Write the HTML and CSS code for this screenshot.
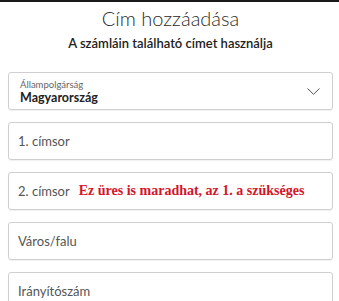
FILE: index.html
```html
<!DOCTYPE html>
<html lang="hu">
<head>
<meta charset="utf-8">
<link rel="stylesheet" href="styles.css">
</head>
<body>
<div class="topline"></div>
<main class="page">
  <h1 class="title">Cím hozzáadása</h1>
  <p class="subtitle">A számláin található címet használja</p>
  <div class="fields">
    <div class="field select">
      <div class="select-text">
        <span class="small-label">Állampolgárság</span>
        <span class="value">Magyarország</span>
      </div>
      <svg class="chevron" width="13" height="7" viewBox="0 0 13 7"><path d="M0.5 0.5 L6.5 6.3 L12.5 0.5" fill="none" stroke="#555" stroke-width="1"/></svg>
    </div>
    <div class="field"><span class="placeholder">1. címsor</span></div>
    <div class="field"><span class="placeholder">2. címsor</span><span class="note">Ez üres is maradhat, az 1. a szükséges</span></div>
    <div class="field"><span class="placeholder">Város/falu</span></div>
    <div class="field"><span class="placeholder">Irányítószám</span></div>
  </div>
</main>
</body>
</html>
```
FILE: styles.css
```css
html, body {
  margin: 0;
  padding: 0;
  background: #fff;
}
body {
  font-family: Lato, "Open Sans", sans-serif;
  color: #222;
  overflow: hidden;
}
.topline {
  height: 2px;
  background: #1a1a1a;
}
.page {
  padding: 0 6px 0 8px;
}
.title {
  margin: 3px 0 0;
  text-align: center;
  font-weight: 300;
  font-size: 20px;
  line-height: 26px;
  color: #2a2a2a;
}
.subtitle {
  margin: 3px 0 0;
  text-align: center;
  font-weight: 600;
  font-size: 13px;
  line-height: 18px;
  color: #222;
}
.fields {
  margin-top: 20px;
  display: flex;
  flex-direction: column;
  gap: 12px;
}
.field {
  box-sizing: border-box;
  height: 38px;
  border: 1px solid #cfcfcf;
  border-radius: 3px;
  box-shadow: 0 1px 1px rgba(0,0,0,0.06);
  display: flex;
  align-items: center;
  padding: 0 10px 0 9px;
  flex-shrink: 0;
}
.select {
  justify-content: space-between;
  padding-left: 11px;
  padding-right: 12px;
}
.select-text {
  display: flex;
  flex-direction: column;
  padding-top: 1px;
}
.small-label {
  font-size: 9.5px;
  line-height: 11px;
  color: #666;
}
.value {
  font-size: 12.5px;
  line-height: 15px;
  font-weight: 700;
  color: #222;
}
.placeholder {
  font-size: 13px;
  color: #555;
}
.note {
  margin-left: 9px;
  font-family: "Liberation Serif", serif;
  font-weight: bold;
  font-size: 14px;
  color: #d4142a;
}
```
